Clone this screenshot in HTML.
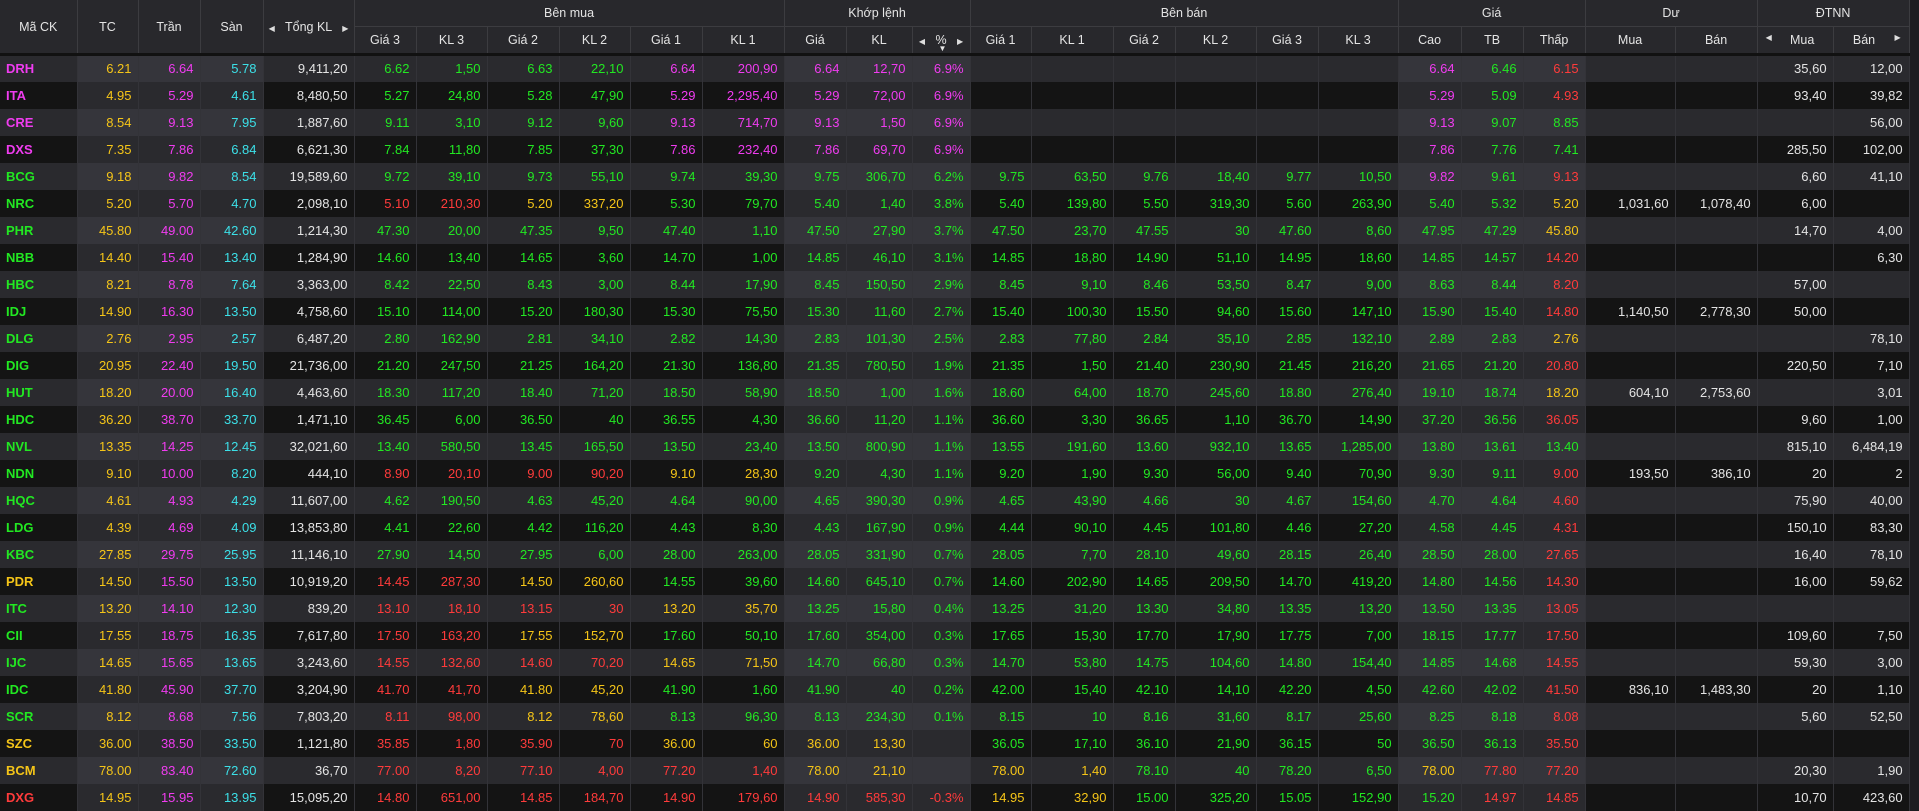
<!DOCTYPE html>
<html><head><meta charset="utf-8">
<style>
html,body{margin:0;padding:0;background:#1c1c20;width:1919px;height:811px;overflow:hidden;}
table{border-collapse:collapse;table-layout:fixed;width:1909px;font-family:"Liberation Sans",Arial,sans-serif;font-size:13px;}
thead th{background:#28282c;color:#e4e4e4;font-weight:normal;border-right:1px solid #3c3c40;border-bottom:1px solid #3c3c40;padding:0;text-align:center;height:26px;font-size:12.5px;}
thead tr.h2 th{border-bottom:3px solid #111;}
thead th .a{font-size:8px;color:#ddd;}
tbody td{height:27px;padding:0 6px 0 0;text-align:right;color:#22e822;border-right:1px solid #333338;white-space:nowrap;overflow:hidden;box-sizing:border-box;}
tbody tr{height:27px;}
tbody tr:nth-child(odd) td{background:#2a2a2e;}
tbody tr:nth-child(even) td{background:#141414;}
tbody tr:nth-child(odd) td:nth-child(2),tbody tr:nth-child(odd) td:nth-child(3),tbody tr:nth-child(odd) td:nth-child(4),
tbody tr:nth-child(odd) td:nth-child(12),tbody tr:nth-child(odd) td:nth-child(13),tbody tr:nth-child(odd) td:nth-child(14),
tbody tr:nth-child(odd) td:nth-child(21),tbody tr:nth-child(odd) td:nth-child(22),tbody tr:nth-child(odd) td:nth-child(23){background:#35353b;}
tbody tr:nth-child(even) td:nth-child(2),tbody tr:nth-child(even) td:nth-child(3),tbody tr:nth-child(even) td:nth-child(4),
tbody tr:nth-child(even) td:nth-child(12),tbody tr:nth-child(even) td:nth-child(13),tbody tr:nth-child(even) td:nth-child(14),
tbody tr:nth-child(even) td:nth-child(21),tbody tr:nth-child(even) td:nth-child(22),tbody tr:nth-child(even) td:nth-child(23){background:#2a2a2e;}
tbody td:nth-child(1){text-align:left;padding-left:6px;font-weight:bold;font-size:13px;}
tbody td:nth-child(2){color:#f5c518;}
tbody td:nth-child(3){color:#f03cf0;}
tbody td:nth-child(4){color:#3ce0e8;}
tbody td:nth-child(5),tbody td:nth-child(24),tbody td:nth-child(25),tbody td:nth-child(26),tbody td:nth-child(27){color:#e4e4e4;}
tbody td.m{color:#f03cf0;}
tbody td.r{color:#ff3b3b;}
tbody td.y{color:#f5c518;}
tbody td.g{color:#22e822;}
</style></head><body>
<table>
<colgroup>
<col style="width:77px"><col style="width:61px"><col style="width:62px"><col style="width:63px"><col style="width:91px">
<col style="width:62px"><col style="width:71px"><col style="width:72px"><col style="width:71px"><col style="width:72px"><col style="width:82px">
<col style="width:62px"><col style="width:66px"><col style="width:58px">
<col style="width:61px"><col style="width:82px"><col style="width:62px"><col style="width:81px"><col style="width:62px"><col style="width:80px">
<col style="width:63px"><col style="width:62px"><col style="width:62px">
<col style="width:90px"><col style="width:82px"><col style="width:76px"><col style="width:76px">
</colgroup>
<thead>
<tr><th rowspan="2" style="border-bottom:3px solid #111">Mã CK</th><th rowspan="2" style="border-bottom:3px solid #111">TC</th><th rowspan="2" style="border-bottom:3px solid #111">Trần</th><th rowspan="2" style="border-bottom:3px solid #111">Sàn</th><th rowspan="2" style="border-bottom:3px solid #111"><span class="a">◀</span>&nbsp;&nbsp; Tổng KL &nbsp;&nbsp;<span class="a">▶</span></th>
<th colspan="6">Bên mua</th><th colspan="3">Khớp lệnh</th><th colspan="6">Bên bán</th><th colspan="3">Giá</th><th colspan="2">Dư</th><th colspan="2">ĐTNN</th></tr>
<tr class="h2"><th>Giá 3</th><th>KL 3</th><th>Giá 2</th><th>KL 2</th><th>Giá 1</th><th>KL 1</th><th>Giá</th><th>KL</th><th style="position:relative"><span class="a">◀</span>&nbsp;&nbsp; % &nbsp;&nbsp;<span class="a">▶</span><span style="position:absolute;left:26px;top:17px;font-size:8px">▼</span></th><th>Giá 1</th><th>KL 1</th><th>Giá 2</th><th>KL 2</th><th>Giá 3</th><th>KL 3</th><th>Cao</th><th>TB</th><th>Thấp</th><th>Mua</th><th>Bán</th><th><span class="a" style="float:left;margin-left:8px">◀</span>Mua</th><th>Bán<span class="a" style="float:right;margin-right:8px">▶</span></th></tr>
</thead>
<tbody>
<tr><td class=m>DRH<td>6.21<td>6.64<td>5.78<td>9,411,20<td>6.62<td>1,50<td>6.63<td>22,10<td class=m>6.64<td class=m>200,90<td class=m>6.64<td class=m>12,70<td class=m>6.9%<td><td><td><td><td><td><td class=m>6.64<td>6.46<td class=r>6.15<td><td><td>35,60<td>12,00</tr>
<tr><td class=m>ITA<td>4.95<td>5.29<td>4.61<td>8,480,50<td>5.27<td>24,80<td>5.28<td>47,90<td class=m>5.29<td class=m>2,295,40<td class=m>5.29<td class=m>72,00<td class=m>6.9%<td><td><td><td><td><td><td class=m>5.29<td>5.09<td class=r>4.93<td><td><td>93,40<td>39,82</tr>
<tr><td class=m>CRE<td>8.54<td>9.13<td>7.95<td>1,887,60<td>9.11<td>3,10<td>9.12<td>9,60<td class=m>9.13<td class=m>714,70<td class=m>9.13<td class=m>1,50<td class=m>6.9%<td><td><td><td><td><td><td class=m>9.13<td>9.07<td>8.85<td><td><td><td>56,00</tr>
<tr><td class=m>DXS<td>7.35<td>7.86<td>6.84<td>6,621,30<td>7.84<td>11,80<td>7.85<td>37,30<td class=m>7.86<td class=m>232,40<td class=m>7.86<td class=m>69,70<td class=m>6.9%<td><td><td><td><td><td><td class=m>7.86<td>7.76<td>7.41<td><td><td>285,50<td>102,00</tr>
<tr><td>BCG<td>9.18<td>9.82<td>8.54<td>19,589,60<td>9.72<td>39,10<td>9.73<td>55,10<td>9.74<td>39,30<td>9.75<td>306,70<td>6.2%<td>9.75<td>63,50<td>9.76<td>18,40<td>9.77<td>10,50<td class=m>9.82<td>9.61<td class=r>9.13<td><td><td>6,60<td>41,10</tr>
<tr><td>NRC<td>5.20<td>5.70<td>4.70<td>2,098,10<td class=r>5.10<td class=r>210,30<td class=y>5.20<td class=y>337,20<td>5.30<td>79,70<td>5.40<td>1,40<td>3.8%<td>5.40<td>139,80<td>5.50<td>319,30<td>5.60<td>263,90<td>5.40<td>5.32<td class=y>5.20<td>1,031,60<td>1,078,40<td>6,00<td></tr>
<tr><td>PHR<td>45.80<td>49.00<td>42.60<td>1,214,30<td>47.30<td>20,00<td>47.35<td>9,50<td>47.40<td>1,10<td>47.50<td>27,90<td>3.7%<td>47.50<td>23,70<td>47.55<td>30<td>47.60<td>8,60<td>47.95<td>47.29<td class=y>45.80<td><td><td>14,70<td>4,00</tr>
<tr><td>NBB<td>14.40<td>15.40<td>13.40<td>1,284,90<td>14.60<td>13,40<td>14.65<td>3,60<td>14.70<td>1,00<td>14.85<td>46,10<td>3.1%<td>14.85<td>18,80<td>14.90<td>51,10<td>14.95<td>18,60<td>14.85<td>14.57<td class=r>14.20<td><td><td><td>6,30</tr>
<tr><td>HBC<td>8.21<td>8.78<td>7.64<td>3,363,00<td>8.42<td>22,50<td>8.43<td>3,00<td>8.44<td>17,90<td>8.45<td>150,50<td>2.9%<td>8.45<td>9,10<td>8.46<td>53,50<td>8.47<td>9,00<td>8.63<td>8.44<td class=r>8.20<td><td><td>57,00<td></tr>
<tr><td>IDJ<td>14.90<td>16.30<td>13.50<td>4,758,60<td>15.10<td>114,00<td>15.20<td>180,30<td>15.30<td>75,50<td>15.30<td>11,60<td>2.7%<td>15.40<td>100,30<td>15.50<td>94,60<td>15.60<td>147,10<td>15.90<td>15.40<td class=r>14.80<td>1,140,50<td>2,778,30<td>50,00<td></tr>
<tr><td>DLG<td>2.76<td>2.95<td>2.57<td>6,487,20<td>2.80<td>162,90<td>2.81<td>34,10<td>2.82<td>14,30<td>2.83<td>101,30<td>2.5%<td>2.83<td>77,80<td>2.84<td>35,10<td>2.85<td>132,10<td>2.89<td>2.83<td class=y>2.76<td><td><td><td>78,10</tr>
<tr><td>DIG<td>20.95<td>22.40<td>19.50<td>21,736,00<td>21.20<td>247,50<td>21.25<td>164,20<td>21.30<td>136,80<td>21.35<td>780,50<td>1.9%<td>21.35<td>1,50<td>21.40<td>230,90<td>21.45<td>216,20<td>21.65<td>21.20<td class=r>20.80<td><td><td>220,50<td>7,10</tr>
<tr><td>HUT<td>18.20<td>20.00<td>16.40<td>4,463,60<td>18.30<td>117,20<td>18.40<td>71,20<td>18.50<td>58,90<td>18.50<td>1,00<td>1.6%<td>18.60<td>64,00<td>18.70<td>245,60<td>18.80<td>276,40<td>19.10<td>18.74<td class=y>18.20<td>604,10<td>2,753,60<td><td>3,01</tr>
<tr><td>HDC<td>36.20<td>38.70<td>33.70<td>1,471,10<td>36.45<td>6,00<td>36.50<td>40<td>36.55<td>4,30<td>36.60<td>11,20<td>1.1%<td>36.60<td>3,30<td>36.65<td>1,10<td>36.70<td>14,90<td>37.20<td>36.56<td class=r>36.05<td><td><td>9,60<td>1,00</tr>
<tr><td>NVL<td>13.35<td>14.25<td>12.45<td>32,021,60<td>13.40<td>580,50<td>13.45<td>165,50<td>13.50<td>23,40<td>13.50<td>800,90<td>1.1%<td>13.55<td>191,60<td>13.60<td>932,10<td>13.65<td>1,285,00<td>13.80<td>13.61<td>13.40<td><td><td>815,10<td>6,484,19</tr>
<tr><td>NDN<td>9.10<td>10.00<td>8.20<td>444,10<td class=r>8.90<td class=r>20,10<td class=r>9.00<td class=r>90,20<td class=y>9.10<td class=y>28,30<td>9.20<td>4,30<td>1.1%<td>9.20<td>1,90<td>9.30<td>56,00<td>9.40<td>70,90<td>9.30<td>9.11<td class=r>9.00<td>193,50<td>386,10<td>20<td>2</tr>
<tr><td>HQC<td>4.61<td>4.93<td>4.29<td>11,607,00<td>4.62<td>190,50<td>4.63<td>45,20<td>4.64<td>90,00<td>4.65<td>390,30<td>0.9%<td>4.65<td>43,90<td>4.66<td>30<td>4.67<td>154,60<td>4.70<td>4.64<td class=r>4.60<td><td><td>75,90<td>40,00</tr>
<tr><td>LDG<td>4.39<td>4.69<td>4.09<td>13,853,80<td>4.41<td>22,60<td>4.42<td>116,20<td>4.43<td>8,30<td>4.43<td>167,90<td>0.9%<td>4.44<td>90,10<td>4.45<td>101,80<td>4.46<td>27,20<td>4.58<td>4.45<td class=r>4.31<td><td><td>150,10<td>83,30</tr>
<tr><td>KBC<td>27.85<td>29.75<td>25.95<td>11,146,10<td>27.90<td>14,50<td>27.95<td>6,00<td>28.00<td>263,00<td>28.05<td>331,90<td>0.7%<td>28.05<td>7,70<td>28.10<td>49,60<td>28.15<td>26,40<td>28.50<td>28.00<td class=r>27.65<td><td><td>16,40<td>78,10</tr>
<tr><td class=y>PDR<td>14.50<td>15.50<td>13.50<td>10,919,20<td class=r>14.45<td class=r>287,30<td class=y>14.50<td class=y>260,60<td>14.55<td>39,60<td>14.60<td>645,10<td>0.7%<td>14.60<td>202,90<td>14.65<td>209,50<td>14.70<td>419,20<td>14.80<td>14.56<td class=r>14.30<td><td><td>16,00<td>59,62</tr>
<tr><td>ITC<td>13.20<td>14.10<td>12.30<td>839,20<td class=r>13.10<td class=r>18,10<td class=r>13.15<td class=r>30<td class=y>13.20<td class=y>35,70<td>13.25<td>15,80<td>0.4%<td>13.25<td>31,20<td>13.30<td>34,80<td>13.35<td>13,20<td>13.50<td>13.35<td class=r>13.05<td><td><td><td></tr>
<tr><td>CII<td>17.55<td>18.75<td>16.35<td>7,617,80<td class=r>17.50<td class=r>163,20<td class=y>17.55<td class=y>152,70<td>17.60<td>50,10<td>17.60<td>354,00<td>0.3%<td>17.65<td>15,30<td>17.70<td>17,90<td>17.75<td>7,00<td>18.15<td>17.77<td class=r>17.50<td><td><td>109,60<td>7,50</tr>
<tr><td>IJC<td>14.65<td>15.65<td>13.65<td>3,243,60<td class=r>14.55<td class=r>132,60<td class=r>14.60<td class=r>70,20<td class=y>14.65<td class=y>71,50<td>14.70<td>66,80<td>0.3%<td>14.70<td>53,80<td>14.75<td>104,60<td>14.80<td>154,40<td>14.85<td>14.68<td class=r>14.55<td><td><td>59,30<td>3,00</tr>
<tr><td>IDC<td>41.80<td>45.90<td>37.70<td>3,204,90<td class=r>41.70<td class=r>41,70<td class=y>41.80<td class=y>45,20<td>41.90<td>1,60<td>41.90<td>40<td>0.2%<td>42.00<td>15,40<td>42.10<td>14,10<td>42.20<td>4,50<td>42.60<td>42.02<td class=r>41.50<td>836,10<td>1,483,30<td>20<td>1,10</tr>
<tr><td>SCR<td>8.12<td>8.68<td>7.56<td>7,803,20<td class=r>8.11<td class=r>98,00<td class=y>8.12<td class=y>78,60<td>8.13<td>96,30<td>8.13<td>234,30<td>0.1%<td>8.15<td>10<td>8.16<td>31,60<td>8.17<td>25,60<td>8.25<td>8.18<td class=r>8.08<td><td><td>5,60<td>52,50</tr>
<tr><td class=y>SZC<td>36.00<td>38.50<td>33.50<td>1,121,80<td class=r>35.85<td class=r>1,80<td class=r>35.90<td class=r>70<td class=y>36.00<td class=y>60<td class=y>36.00<td class=y>13,30<td><td>36.05<td>17,10<td>36.10<td>21,90<td>36.15<td>50<td>36.50<td>36.13<td class=r>35.50<td><td><td><td></tr>
<tr><td class=y>BCM<td>78.00<td>83.40<td>72.60<td>36,70<td class=r>77.00<td class=r>8,20<td class=r>77.10<td class=r>4,00<td class=r>77.20<td class=r>1,40<td class=y>78.00<td class=y>21,10<td><td class=y>78.00<td class=y>1,40<td>78.10<td>40<td>78.20<td>6,50<td class=y>78.00<td class=r>77.80<td class=r>77.20<td><td><td>20,30<td>1,90</tr>
<tr><td class=r>DXG<td>14.95<td>15.95<td>13.95<td>15,095,20<td class=r>14.80<td class=r>651,00<td class=r>14.85<td class=r>184,70<td class=r>14.90<td class=r>179,60<td class=r>14.90<td class=r>585,30<td class=r>-0.3%<td class=y>14.95<td class=y>32,90<td>15.00<td>325,20<td>15.05<td>152,90<td>15.20<td class=r>14.97<td class=r>14.85<td><td><td>10,70<td>423,60</tr>
</tbody>
</table>
</body></html>
